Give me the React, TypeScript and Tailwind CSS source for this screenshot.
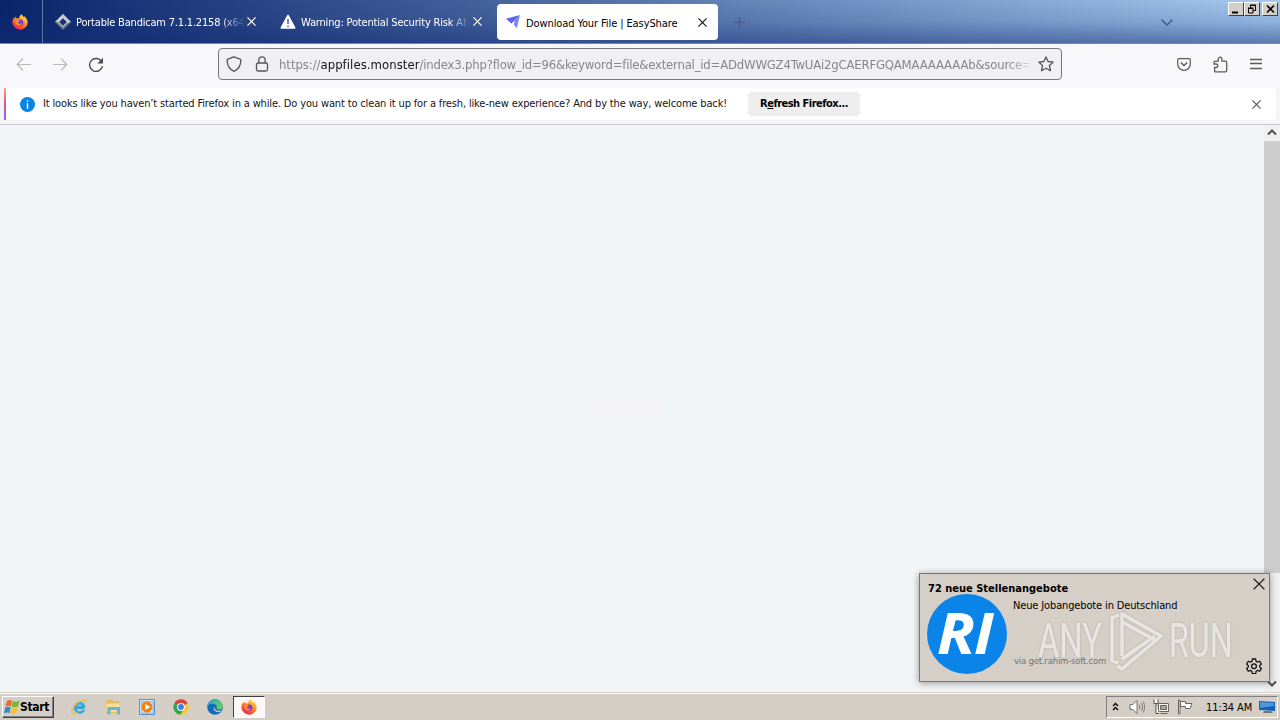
import type { ReactNode } from 'react';

function FirefoxIcon({ size = 16 }: { size?: number }) {
  return (
    <svg width={size} height={size} viewBox="0 0 16 16" className="shrink-0">
      <defs>
        <linearGradient id="fx" x1="0.8" y1="0.1" x2="0.2" y2="1">
          <stop offset="0" stopColor="#ffe14a" />
          <stop offset="0.4" stopColor="#ff8a1e" />
          <stop offset="0.75" stopColor="#ff4038" />
          <stop offset="1" stopColor="#e31587" />
        </linearGradient>
      </defs>
      <path
        d="M9.2 0.3c1.3.8 2.1 1.9 2.5 3 .3-.4.3-.9.2-1.4 2.4 1.6 4 4.2 3.8 7A7.7 7.7 0 0 1 .4 8.7C.3 6.8.9 4.9 2 3.6l.1 1.1C2.5 3.7 3.1 3 3.9 2.5c0 .6.1 1.2.5 1.7.9-.1 1.7 0 2.4.3C7.3 3 8 1.5 9.2.3z"
        fill="url(#fx)"
      />
      <circle cx="8.2" cy="8.6" r="3.2" fill="#7a3ce0" />
      <path d="M3.4 6.8c1.2-1.3 2.8-1 4.4.1-.2.9-2.2.8-2.3 1.7 1 1.6 3.2 1.4 4.3.6-.6 2.7-5 2.900-6.200.1z" fill="#ff9a1f" />
    </svg>
  );
}

function CloseIcon({ size = 9, color = '#fff', width = 1.3 }: { size?: number; color?: string; width?: number }) {
  return (
    <svg width={size} height={size} viewBox="0 0 10 10" className="shrink-0" stroke={color} strokeWidth={width}>
      <path d="M.5.5l9 9M9.5.5l-9 9" fill="none" />
    </svg>
  );
}

function TabStrip() {
  return (
    <div className="flex h-[44px] shrink-0 border-b border-[#7488ad] bg-[linear-gradient(to_bottom,transparent_0%,rgba(16,44,116,0.15)_50%,rgba(16,44,116,0.5)_100%),linear-gradient(to_right,#0a246a,#a6caf0)]">
      <div className="flex w-[43px] items-center border-r border-[#5f77a8] pl-3">
        <FirefoxIcon />
      </div>
      <div className="flex w-[225px] items-center pl-3">
        <svg width="16" height="16" viewBox="0 0 16 16" className="shrink-0">
          <path d="M8 0l8 8-8 8-8-8z" fill="#777982" />
          <path d="M8 0l8 8-4 1-4-5-4 4-4 0z" fill="#c8c9cd" />
          <path d="M8 3.5L12.5 8 8 12.5 3.5 8z" fill="#173374" stroke="#f4f4f4" />
        </svg>
        <span className="ml-[5px] w-[169px] overflow-hidden whitespace-nowrap pt-[3px] text-[11px] leading-4 tracking-[-0.2px] text-white [mask-image:linear-gradient(to_right,#000_86%,transparent_100%)]">
          Portable Bandicam 7.1.1.2158 (x64)
        </span>
        <span className="ml-[2px]">
          <CloseIcon />
        </span>
      </div>
      <div className="flex w-[229px] items-center pl-3">
        <svg width="16" height="16" viewBox="0 0 16 16" className="shrink-0">
          <path d="M8 1.5L14.7 14H1.3z" fill="#fff" stroke="#fff" strokeWidth="1.6" strokeLinejoin="round" />
          <path d="M8 5v5M8 11.5v1.5" stroke="#294986" strokeWidth="1.3" />
        </svg>
        <span className="ml-[5px] w-[166px] overflow-hidden whitespace-nowrap pt-[3px] text-[11px] leading-4 tracking-[-0.17px] text-white [mask-image:linear-gradient(to_right,#000_90%,transparent_102%)]">
          Warning: Potential Security Risk Ahead
        </span>
        <span className="ml-[6px]">
          <CloseIcon />
        </span>
      </div>
      <div className="mt-1 flex h-9 w-[221px] items-center rounded bg-white pl-2">
        <svg width="16" height="16" viewBox="0 0 16 16" className="shrink-0">
          <path d="M15 1L.8 4.8l4.400 3.400 4.600-1.800z" fill="#5b62f2" />
          <path d="M15 1l-3.200 13.200-3-3.400 1-4.400z" fill="#7c82ff" />
          <path d="M9.800 6.400L5.200 8.200l1 1.300z" fill="#4042c4" />
        </svg>
        <span className="ml-[5px] w-[167px] whitespace-nowrap pt-[3px] text-[11px] leading-4 tracking-[-0.1px] text-black">
          Download Your File | EasyShare
        </span>
        <span className="ml-[5px]">
          <CloseIcon color="#15141a" />
        </span>
      </div>
      <svg width="11" height="11" viewBox="0 0 11 11" className="ml-[16px] mt-[17px]" stroke="#4a5f8a" strokeWidth="1.6">
        <path d="M5.5 0v11M0 5.5h11" />
      </svg>
      <svg width="12" height="7" viewBox="0 0 12 7" className="ml-[416px] mt-[19px]" fill="none" stroke="#435f8b" strokeWidth="1.5">
        <path d="M.6.6L6 6 11.4.6" />
      </svg>
      <div className="ml-[55px] mt-[2px] flex h-[14px]">
        <CaptionButton>
          <path d="M3 9.5h6" strokeWidth="2" />
        </CaptionButton>
        <CaptionButton>
          <path d="M5.5 5V2.5h5v5H8M5 2h6M3.5 5.5h4.5v4.5H3.5zM3 5h5.5" />
        </CaptionButton>
        <span className="w-[2px]" />
        <CaptionButton>
          <path d="M4 2.5l7 7M11 2.5l-7 7" strokeWidth="1.6" />
        </CaptionButton>
      </div>
    </div>
  );
}

function CaptionButton({ children }: { children: ReactNode }) {
  return (
    <div className="h-[14px] w-[16px] border border-b-[#404040] border-l-white border-r-[#404040] border-t-white bg-[#d4d0c8]">
      <svg width="14" height="12" viewBox="0 0 14 12" fill="none" stroke="#000">
        {children}
      </svg>
    </div>
  );
}

function NavBar() {
  return (
    <div className="flex h-[44px] shrink-0 items-center bg-[#f8f8fb] pb-[4px]">
      <svg width="16" height="16" viewBox="0 0 16 16" className="ml-4" fill="none" stroke="#b9b9be" strokeWidth="1.2">
        <path d="M15 8.5H1.500M7 2.500L1.300 8.500 7 14.500" />
      </svg>
      <svg width="16" height="16" viewBox="0 0 16 16" className="ml-5" fill="none" stroke="#b9b9be" strokeWidth="1.2">
        <path d="M1 8.5h13.5M9 2.5l5.7 6L9 14.5" />
      </svg>
      <svg width="16" height="16" viewBox="0 0 16 16" className="ml-5" fill="none" stroke="#4b4b52" strokeWidth="1.4">
        <path d="M13.6 5.5A6.5 6.5 0 1 0 14.5 10" />
        <path d="M15 1.8v5.7H9.3z" fill="#4b4b52" stroke="none" />
      </svg>
      <div className="ml-[114px] flex h-8 w-[844px] items-center rounded border border-[#77777c] bg-[#f0f0f4] pl-[7px]">
        <svg width="16" height="16" viewBox="0 0 16 16" fill="none" stroke="#55555c" strokeWidth="1.3">
          <path d="M8 .8l6 2.3c.7.3.9.7.9 1.3-.2 5-2.5 9-6.9 10.9C3.6 13.4 1.3 9.4 1.1 4.4c0-.6.2-1 .9-1.3z" />
        </svg>
        <svg width="16" height="16" viewBox="0 0 16 16" className="ml-3" fill="none" stroke="#55555c" strokeWidth="1.3">
          <rect x="2.5" y="7" width="11" height="8" rx="1.5" />
          <path d="M4.8 7V4a3.2 3.2 0 0 1 6.4 0v3" />
        </svg>
        <span className="ml-[9px] w-[750px] overflow-hidden whitespace-nowrap pt-px text-[13px] leading-5 tracking-[-0.2px] text-[#85858b] [mask-image:linear-gradient(to_right,#000_97%,transparent_101%)]">
          <span className="tracking-[-0.06px]">
            https://<span className="tracking-[0.05px] text-[#15141a]">appfiles.monster</span>
          </span>
          /index3.php?flow_id=96&amp;keyword=file&amp;external_id=ADdWWGZ4TwUAi2gCAERFGQAMAAAAAAAb&amp;source=
        </span>
        <svg width="16" height="16" viewBox="0 0 16 16" className="ml-[9px] shrink-0" fill="none" stroke="#55555c" strokeWidth="1.3" strokeLinejoin="round">
          <path d="M8 .9l2.100 4.600 5.100.6-3.800 3.400 1.100 5.200L8 12.200l-4.500 2.500 1.100-5.200L.8 6.100l5.100-.6z" />
        </svg>
      </div>
      <svg width="14" height="13" viewBox="0 0 14 13" className="ml-[115px]" fill="none" stroke="#5b5b62" strokeWidth="1.2">
        <path d="M2 .7h10c.8 0 1.3.5 1.3 1.3v4A6.3 6.3 0 0 1 .7 6V2C.7 1.2 1.2.7 2 .7z" />
        <path d="M3.8 4.5L7 7.5l3.2-3" strokeWidth="1.4" />
      </svg>
      <svg width="15" height="17" viewBox="0 0 15 17" className="ml-[22px]" fill="none" stroke="#5b5b62" strokeWidth="1.3">
        <path d="M1.6 15.500V11.500h1.500a1.700 1.700 0 0 0 0-3.500H1V6.500c0-.8.500-1.300 1.300-1.300h3V3a1.800 1.800 0 0 1 3.600 0v2.200h3.600c.7 0 1.200.5 1.200 1.300v8c0 .8-.5 1.300-1.200 1.300H1.900z" />
      </svg>
      <svg width="12" height="12" viewBox="0 0 12 12" className="ml-[22px]" stroke="#5b5b62" strokeWidth="1.3">
        <path d="M0 1.5h12M0 5.5h12M0 10.5h12" />
      </svg>
    </div>
  );
}

function InfoBar() {
  return (
    <div className="flex h-[37px] shrink-0 border-b border-[#c9c9cd] bg-[#f5f5f8] px-1 pb-1">
      <div className="w-[2px] bg-gradient-to-b from-[#ff9a76] via-[#e0508e] to-[#9059ff]" />
      <div className="flex flex-1 items-center rounded-r bg-white">
        <svg width="15" height="15" viewBox="0 0 15 15" className="ml-[14px]">
          <circle cx="7.5" cy="7.5" r="7.5" fill="#0a84e4" />
          <path d="M7.5 3.2v1.700M7.500 6.300v5.400" stroke="#fff" strokeWidth="1.4" />
        </svg>
        <span className="ml-2 w-[705px] whitespace-nowrap text-[11px] leading-4 tracking-[-0.148px] text-[#15141a]">
          It looks like you haven’t started Firefox in a while. Do you want to clean it up for a fresh, like-new experience? And by the way, welcome back!
        </span>
        <button className="h-6 w-[112px] whitespace-nowrap rounded bg-[#eeeeef] pt-px text-[11px] font-bold tracking-[-0.52px] text-black">
          R<span className="underline">e</span>fresh Firefox...
        </button>
        <span className="ml-[392px]">
          <CloseIcon color="#55555c" />
        </span>
      </div>
    </div>
  );
}

function Scrollbar() {
  return (
    <div className="flex w-4 flex-col bg-[#f0f0f0]">
      <svg width="16" height="16" viewBox="0 0 16 16" fill="none" stroke="#505050" strokeWidth="2">
        <path d="M4 9.5l4-4 4 4" />
      </svg>
      <div className="h-[432px] bg-[#cdcdcd]" />
      <svg width="16" height="16" viewBox="0 0 16 16" className="mt-auto" fill="none" stroke="#505050" strokeWidth="2">
        <path d="M4 5.5l4 4 4-4" />
      </svg>
    </div>
  );
}

function Notification() {
  return (
    <div className="absolute left-[919px] top-[573px] flex h-[109px] w-[351px] flex-col border border-[#77777a] bg-[#d5cfc8] shadow-[0_1px_7px_rgba(0,0,0,0.4)]">
      <div className="flex h-[20px] justify-between pl-[8px] pr-1">
        <span className="whitespace-nowrap pt-[7px] text-[11px] font-bold leading-4 text-black">72 neue Stellenangebote</span>
        <span className="pt-1">
          <CloseIcon size={12} color="#111" width={1.1} />
        </span>
      </div>
      <div className="flex pl-[7px]">
        <div className="flex h-20 w-20 items-center justify-center rounded-full bg-[#0a84e8]">
          <span className="scale-x-[1.08] pb-1 pr-1 font-['Open_Sans',sans-serif] text-[58px] font-bold italic leading-none tracking-[-1px] text-white">
            RI
          </span>
        </div>
        <div className="flex flex-1 flex-col pl-[6px]">
          <span className="mt-[4px] whitespace-nowrap text-[11px] leading-4 tracking-[-0.14px] text-black">Neue Jobangebote in Deutschland</span>
          <span className="mt-[39px] whitespace-nowrap pl-px text-[9.5px] leading-4 tracking-[-0.22px] text-[#77736f]">via get.rahim-soft.com</span>
        </div>
      </div>
      <svg width="16" height="16" viewBox="0 0 24 24" className="absolute bottom-[7px] right-[7px]" fill="none" stroke="#111" strokeWidth="1.9" strokeLinejoin="round">
        <path d="M9.5 1.500h5l.7 3.500 2 1.100 3.400-1.200 2.500 4.300-2.700 2.300v1.800l2.700 2.300-2.500 4.300-3.400-1.200-2 1.100-.7 3.500h-5l-.7-3.500-2-1.100-3.400 1.200L.9 15.600l2.700-2.300v-1.800L.9 9.200l2.500-4.300 3.400 1.200 2-1.100z" />
        <circle cx="12" cy="12.4" r="3.6" />
      </svg>
      <Watermark />
    </div>
  );
}

function Watermark() {
  return (
    <div className="absolute left-[118px] top-[36px] flex h-[62px] items-center font-[Roboto,sans-serif] text-[48px] leading-none text-white/65 [text-shadow:0_0_3px_rgba(120,110,100,0.35)]">
      <span className="w-[70px]">
        <span className="inline-block origin-left scale-x-[0.68]">ANY</span>
      </span>
      <svg
        width="56"
        height="62"
        viewBox="0 0 56 62"
        className="drop-shadow-[0_0_1px_rgba(120,110,100,0.5)]"
        fill="none"
        stroke="#fff"
        strokeOpacity="0.65"
        strokeWidth="3.4"
        strokeLinejoin="round"
      >
        <path d="M11 5L4 8v43l6 2M14 46V4l39 22-39 33-5-3M14 12l33 18M14 49l33-23" />
      </svg>
      <span className="ml-[5px] w-[70px]">
        <span className="inline-block origin-left scale-x-[0.67]">RUN</span>
      </span>
    </div>
  );
}

function Taskbar() {
  return (
    <div className="flex h-[28px] shrink-0 items-center border-t border-[#d4d0c8] bg-[#d4cec6] shadow-[inset_0_1px_0_#fff]">
      <div className="ml-[2px] flex h-[22px] w-[52px] items-center border border-b-[#404040] border-l-white border-r-[#404040] border-t-white pl-px shadow-[inset_-1px_-1px_0_#808080]">
        <svg width="16" height="16" viewBox="0 0 16 16" className="shrink-0">
          <path d="M3 2c2-1.500 3.500-1.300 5-.4L6.800 7.400C5.300 6.500 3.500 6.600 1.500 7.600z" fill="#ed6a2c" />
          <path d="M8.8 2c2 1 4.3.8 6.7-.3L14 7.4c-2 1.1-4.5 1-6.4 0z" fill="#79b83c" />
          <path d="M1.2 8.6c2-1.2 3.9-1.1 5.4-.2l-1.2 5.800c-1.700-1-3.700-.8-5.400.2z" fill="#3389cf" />
          <path d="M7.4 8.8c2 1 4.2.9 6.3-.2l-1.3 5.700c-2 1.100-4.300 1-6.200 0z" fill="#f6c231" />
        </svg>
        <span className="text-[12px] font-bold tracking-[-0.35px] text-black">Start</span>
      </div>
      <svg width="16" height="16" viewBox="0 0 16 16" className="ml-[17px]" fill="none">
        <path d="M13.3 9.2H5M5 7.8c.2-5 7.300-4.500 7.800 0H5.500M13 11c-2 4-9 3-9-2.500C4 3.500 12.500 2 13.200 8.500" stroke="#36a8e0" strokeWidth="2.3" />
        <path d="M15 3.5C15.500-.5 9 1.500 4.500 6 .5 10-.5 14.500 2 15c1.500.2 3-1 4-2" stroke="#e9b93a" strokeWidth="1.1" />
      </svg>
      <svg width="16" height="16" viewBox="0 0 16 16" className="ml-[18px]">
        <path d="M1 2l1.5-1.500h4L8 2h6v12H1z" fill="#e7bd5b" />
        <path d="M1.5 4.5h13v8.5h-13z" fill="#f7df93" />
        <path d="M2.5 8h12.500v7.500H12V11H5.500v4.500h-3z" fill="#66b6dc" />
      </svg>
      <svg width="16" height="16" viewBox="0 0 16 16" className="ml-[18px]">
        <rect x=".5" y=".5" width="15" height="15" fill="#cfe2f3" stroke="#5b93c9" />
        <rect x="3" y="3" width="11" height="11" fill="#fff" stroke="#77a7d2" />
        <circle cx="8" cy="8" r="5.5" fill="#f18416" />
        <path d="M6.3 5l5 3-5 3z" fill="#fff" />
      </svg>
      <svg width="16" height="16" viewBox="0 0 16 16" className="ml-[18px]">
        <circle cx="8" cy="8" r="7.7" fill="#f8c920" />
        <path d="M8 8L1.3 4.2A7.7 7.7 0 0 1 14.7 4.2z" fill="#df4135" />
        <path d="M8 8L1.3 4.2A7.7 7.7 0 0 0 7.3 15.7L11 9.8z" fill="#36a352" />
        <circle cx="8" cy="8" r="3.9" fill="#fff" />
        <circle cx="8" cy="8" r="2.9" fill="#3b7ded" />
      </svg>
      <svg width="16" height="16" viewBox="0 0 16 16" className="ml-[18px]">
        <defs>
          <linearGradient id="edge" x1="0" y1="0" x2="1" y2="0.4">
            <stop offset="0" stopColor="#269de1" />
            <stop offset="1" stopColor="#62d35a" />
          </linearGradient>
        </defs>
        <circle cx="8" cy="8" r="7.8" fill="#146abb" />
        <path d="M.3 7.5C1-1 14-2.500 15.700 7c.3 3-2.700 4.200-5.200 3.200-1.800-.8-.4-1.500-.8-3C8.500 4 2 4 .3 7.500z" fill="url(#edge)" />
        <path d="M7.5 7.5c-.7 3.500 3 5.200 7 3.700-.4.8-1 1.300-1.500 1.800C8.500 14 5 10 7.500 7.500z" fill="#d4cec6" />
      </svg>
      <div className="ml-[10px] flex h-[22px] w-[32px] items-center justify-center border border-b-white border-l-[#404040] border-r-white border-t-[#404040] bg-[#faf9f7]">
        <FirefoxIcon />
      </div>
      <div className="ml-auto mr-[2px] flex h-[22px] w-[172px] items-center border border-b-white border-l-[#808080] border-r-white border-t-[#808080]">
        <svg width="7" height="9" viewBox="0 0 7 9" className="ml-[5px]" fill="none" stroke="#000" strokeWidth="1.3">
          <path d="M1 4l2.5-2.500L6 4M1 8l2.500-2.500L6 8" />
        </svg>
        <svg width="16" height="16" viewBox="0 0 16 16" className="ml-[10px]" fill="none" stroke="#77736f">
          <path d="M1 5.5h3l4-4v13l-4-4H1z" fill="#fff" />
          <path d="M10 5.5c1 1.500 1 3.500 0 5M12 4c2 2.500 2 5.500 0 8M14 2.500c2.300 3.500 2.300 7.500 0 11" />
        </svg>
        <svg width="16" height="16" viewBox="0 0 16 16" className="ml-2" fill="none" stroke="#68645f">
          <path d="M5.5 4.5h10v8h-10zM7.5 14.5h7" fill="#f6f5f2" />
          <path d="M7.5 6.5h6v4h-6z" fill="#aaa69f" />
          <path d="M1 .5v4h4v-4M3 4.5v10h3" stroke="#55514c" fill="#fff" />
        </svg>
        <svg width="16" height="16" viewBox="0 0 16 16" className="ml-2" fill="#fff" stroke="#68645f">
          <path d="M1.5 1h1.5v14H1.5zM3.5 2.5h5v2H15l-2 5H8.5v-2h-5z" />
        </svg>
        <span className="ml-[13px] w-[53px] whitespace-nowrap pt-[2px] text-[11px] leading-4 tracking-[-0.1px] text-black">11:34 AM</span>
        <svg width="16" height="14" viewBox="0 0 16 14" className="shrink-0">
          <path d="M0 1l16 1v9L0 10z" fill="#1461ba" />
          <path d="M1 2l14 1v3L1 8z" fill="#4c96dd" />
          <path d="M5 11h7l2 2H4z" fill="#77736f" />
        </svg>
      </div>
    </div>
  );
}

export default function App() {
  return (
    <div className="relative flex h-[720px] w-[1280px] flex-col overflow-hidden bg-[#f1f5f9] font-['DejaVu_Sans_Condensed','DejaVu_Sans',sans-serif]">
      <TabStrip />
      <NavBar />
      <InfoBar />
      <div className="flex min-h-0 flex-1">
        <div className="flex flex-1 justify-center bg-[#f1f5f8] pt-[275px]">
          <div className="mr-[10px] h-4 w-16 bg-[#f4f3f7]" />
        </div>
        <Scrollbar />
      </div>
      <Taskbar />
      <Notification />
    </div>
  );
}
